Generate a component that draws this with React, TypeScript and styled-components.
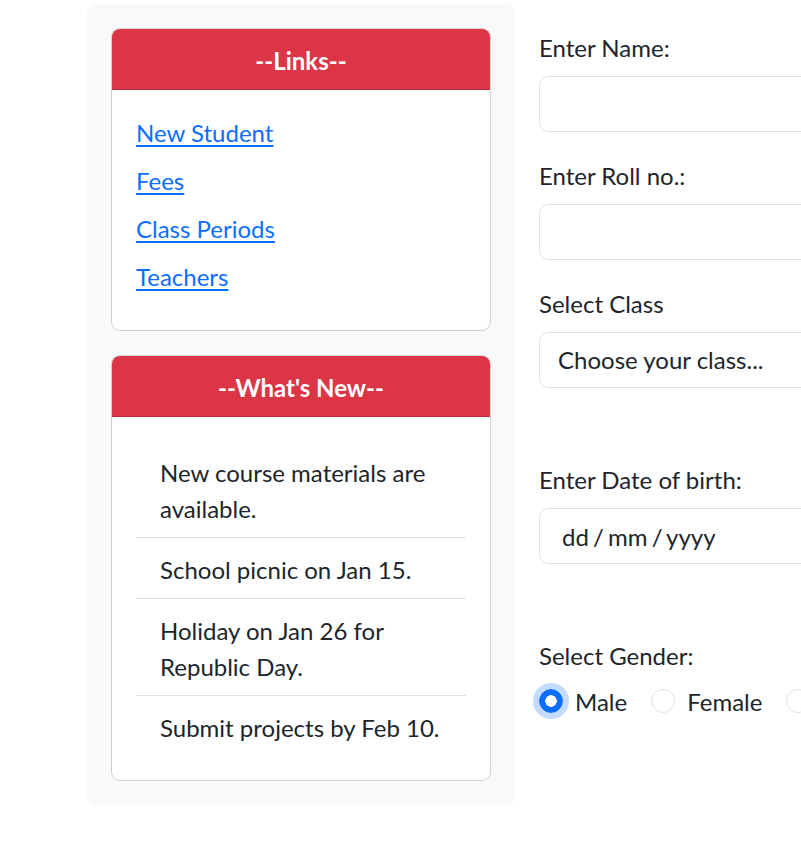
import React from "react";
import styled, { createGlobalStyle } from "styled-components";

const GlobalStyle = createGlobalStyle`
  html, body {
    margin: 0;
    padding: 0;
    overflow: hidden;
    background: #ffffff;
  }
  body {
    font-family: "Lato", "Noto Sans", sans-serif;
    font-size: 24px;
    line-height: 36px;
    color: #212529;
  }
  * { box-sizing: border-box; }
`;

const Page = styled.div`
  display: flex;
  align-items: flex-start;
  gap: 24px;
  padding: 4px 0 0 87px;
  width: 1400px;
`;

const Sidebar = styled.aside`
  flex: 0 0 428px;
  background: #f8f9fa;
  border-radius: 9px;
  padding: 24px;
  display: flex;
  flex-direction: column;
  gap: 24px;
`;

const Card = styled.section`
  background: #ffffff;
  border: 1px solid rgba(0, 0, 0, 0.175);
  border-radius: 9px;
  overflow: hidden;
`;

const CardHeader = styled.header`
  background: #dc3545;
  color: #ffffff;
  font-weight: 700;
  text-align: center;
  padding: 14px 24px 10px;
  border-bottom: 1px solid rgba(0, 0, 0, 0.175);
`;

const CardBody = styled.div<{ $top?: number; $bottom?: number }>`
  padding: ${(p) => p.$top ?? 24}px 24px ${(p) => p.$bottom ?? 24}px;
`;

const LinkList = styled.ul`
  list-style: none;
  margin: 0;
  padding: 0;
  display: flex;
  flex-direction: column;
  gap: 12px;
`;

const NavLink = styled.a`
  color: #0d6efd;
  text-decoration: underline;
  text-underline-offset: 3px;
`;

const NewsList = styled.ul`
  list-style: none;
  margin: 0;
  padding: 0;
`;

const NewsItem = styled.li`
  padding: 14px 24px 10px;
  border-bottom: 1px solid #dee2e6;
  &:last-child {
    border-bottom: none;
  }
`;

const FormColumn = styled.form`
  flex: 0 0 560px;
  padding-top: 24px;
`;

const Field = styled.div<{ $gap: number }>`
  margin-bottom: ${(p) => p.$gap}px;
`;

const Label = styled.label`
  display: block;
  padding-top: 2px;
  margin-bottom: 10px;
`;

const TextInput = styled.input`
  display: block;
  width: 100%;
  height: 56px;
  padding: 9px 18px;
  font: inherit;
  color: #212529;
  background: #ffffff;
  border: 1px solid #dee2e6;
  border-radius: 9px;
  outline: none;
  &::placeholder {
    color: #212529;
    opacity: 1;
  }
`;

const DateInput = styled(TextInput)`
  padding-left: 22px;
  word-spacing: -2px;
`;

const Select = styled.select`
  display: block;
  width: 100%;
  height: 56px;
  padding: 9px 54px 9px 18px;
  font: inherit;
  color: #212529;
  background: #ffffff;
  border: 1px solid #dee2e6;
  border-radius: 9px;
  appearance: none;
  outline: none;
`;

const RadioRow = styled.div`
  display: flex;
  align-items: flex-start;
  gap: 24px;
  margin-top: 1px;
  white-space: nowrap;
`;

const RadioOption = styled.label`
  display: flex;
  align-items: flex-start;
  gap: 12px;
`;

const Radio = styled.input<{ $focused?: boolean }>`
  appearance: none;
  margin: 5px 0 0 0;
  width: 24px;
  height: 24px;
  flex: 0 0 24px;
  border-radius: 50%;
  border: 1px solid #dee2e6;
  background: #ffffff;
  &:checked {
    border-color: #0d6efd;
    background: radial-gradient(circle, #ffffff 0 5.5px, #0d6efd 6px);
  }
  box-shadow: ${(p) => (p.$focused ? "0 0 0 6px rgba(13, 110, 253, 0.25)" : "none")};
`;

const links = ["New Student", "Fees", "Class Periods", "Teachers"];
const news = [
  "New course materials are available.",
  "School picnic on Jan 15.",
  "Holiday on Jan 26 for Republic Day.",
  "Submit projects by Feb 10.",
];

export default function App() {
  return (
    <>
      <GlobalStyle />
      <Page>
        <Sidebar>
          <Card>
            <CardHeader>--Links--</CardHeader>
            <CardBody $top={25} $bottom={35}>
              <LinkList>
                {links.map((l) => (
                  <li key={l}>
                    <NavLink href="#">{l}</NavLink>
                  </li>
                ))}
              </LinkList>
            </CardBody>
          </Card>
          <Card>
            <CardHeader>--What's New--</CardHeader>
            <CardBody>
              <NewsList>
                {news.map((n) => (
                  <NewsItem key={n}>{n}</NewsItem>
                ))}
              </NewsList>
            </CardBody>
          </Card>
        </Sidebar>
        <FormColumn onSubmit={(e) => e.preventDefault()}>
          <Field $gap={24}>
            <Label htmlFor="name">Enter Name:</Label>
            <TextInput id="name" type="text" />
          </Field>
          <Field $gap={24}>
            <Label htmlFor="roll">Enter Roll no.:</Label>
            <TextInput id="roll" type="text" />
          </Field>
          <Field $gap={72}>
            <Label htmlFor="cls">Select Class</Label>
            <Select id="cls" defaultValue="">
              <option value="">Choose your class...</option>
              <option value="1">Class 1</option>
              <option value="2">Class 2</option>
            </Select>
          </Field>
          <Field $gap={72}>
            <Label htmlFor="dob">Enter Date of birth:</Label>
            <DateInput id="dob" type="text" placeholder="dd / mm / yyyy" />
          </Field>
          <Field $gap={24}>
            <Label as="div">Select Gender:</Label>
            <RadioRow>
              <RadioOption>
                <Radio type="radio" name="gender" defaultChecked $focused />
                Male
              </RadioOption>
              <RadioOption>
                <Radio type="radio" name="gender" />
                Female
              </RadioOption>
              <RadioOption>
                <Radio type="radio" name="gender" />
                Other
              </RadioOption>
            </RadioRow>
          </Field>
        </FormColumn>
      </Page>
    </>
  );
}
